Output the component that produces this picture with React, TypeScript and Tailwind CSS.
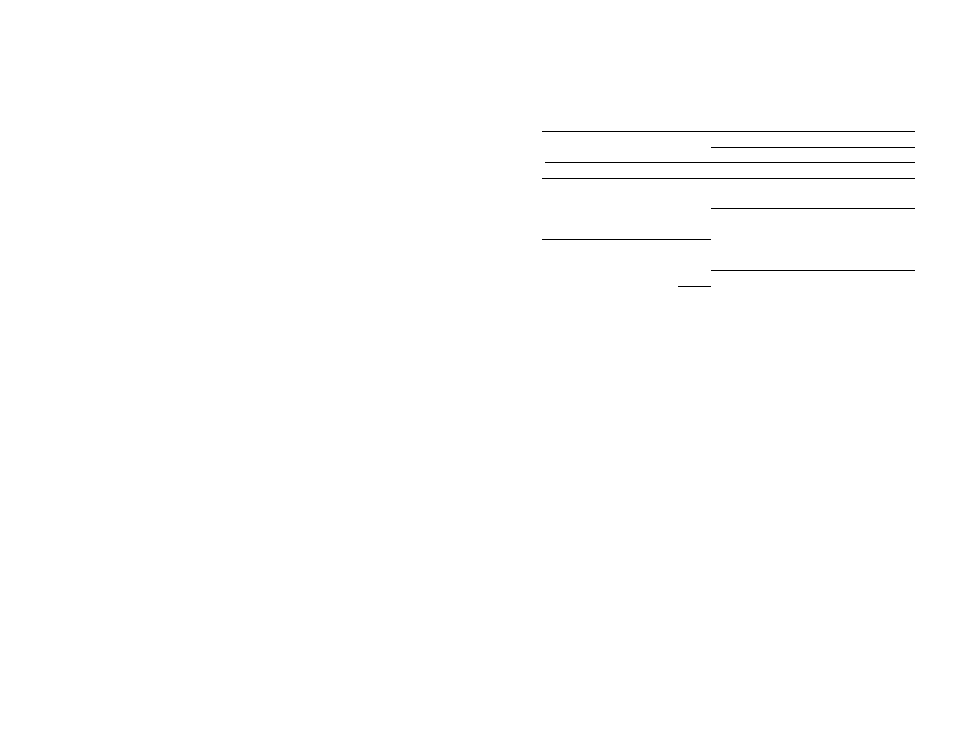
export default function App() {
  return (
    <div className="min-h-screen w-full bg-white pt-[131px] pl-[542px]">
      <div className="w-[373px]">
        {/* header rule block */}
        <div className="flex border-t border-black">
          <div className="w-[169px]" />
          <div className="flex-1 pt-[15px]">
            <div className="border-t border-black" />
          </div>
        </div>
        <div className="h-[14px]" />
        <div className="ml-[3px] border-t border-black" />
        <div className="h-[15px]" />
        <div className="border-t border-black" />

        {/* two column field lines */}
        <div className="flex">
          <div className="w-[169px] flex flex-col">
            <div className="h-[60px]" />
            <div className="border-t border-black" />
            <div className="h-[46px]" />
            <div className="ml-[136px] border-t border-black" />
          </div>
          <div className="flex-1 flex flex-col">
            <div className="h-[29px]" />
            <div className="border-t border-black" />
            <div className="h-[61px]" />
            <div className="border-t border-black" />
          </div>
        </div>
      </div>
    </div>
  );
}
